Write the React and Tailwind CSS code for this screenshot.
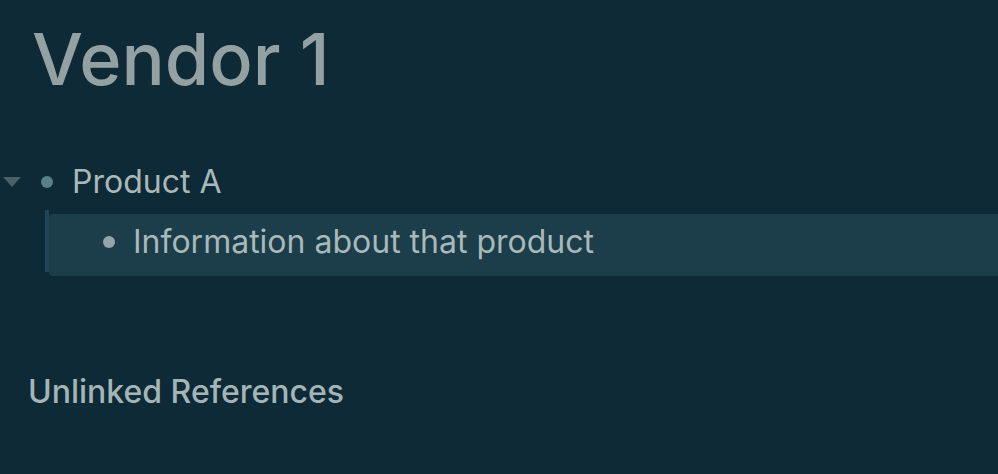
import React from 'react';

const App = () => {
    return (
        <div className="min-h-screen w-full bg-[#0e2a36] font-['Inter',sans-serif] overflow-hidden">
            <h1 className="pl-[32px] pt-[16px] text-[72px] leading-[86px] font-medium text-[#93a1a2]">Vendor 1</h1>

            <div className="mt-[60px]">
                {/* parent block */}
                <div className="flex items-center h-[40px]">
                    <svg className="w-[18px] h-[10px] ml-[3px]" viewBox="0 0 18 10">
                        <path d="M0 0 L18 0 L9 10 Z" fill="#4a6168" />
                    </svg>
                    <div className="w-[12px] h-[12px] rounded-full bg-[#5b7f86] ml-[20px]" />
                    <span className="ml-[19px] text-[32px] leading-[40px] text-[#a9b8b9]">Product A</span>
                </div>

                {/* child block */}
                <div className="flex items-start mt-[8px]">
                    <div className="ml-[45px] w-[4px] h-[62px] bg-[#1f4656]" />
                    <div className="flex-1 flex items-center h-[62px] mt-[4px] pb-[6px] rounded-l-[4px] bg-[#1c3d4a]">
                        <div className="w-[12px] h-[12px] rounded-full bg-[#94a4a8] ml-[54px]" />
                        <span className="ml-[18px] text-[32px] leading-[40px] text-[#a9b8b9]">Information about that product</span>
                    </div>
                </div>
            </div>

            <h2 className="pl-[28px] mt-[97px] text-[32px] leading-[38px] font-medium text-[#a3b5b7]">Unlinked References</h2>
        </div>
    );
};

export default App;
